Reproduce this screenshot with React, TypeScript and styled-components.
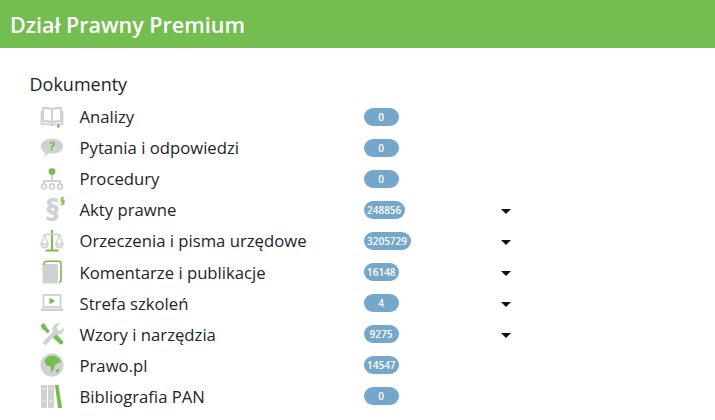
import React from "react";
import styled, { createGlobalStyle } from "styled-components";

const GREEN = "#74bd50";
const GREY = "#cfd2d3";

const BookIcon = () => (
  <svg viewBox="0 0 24 22" width="24" height="22">
    <path d="M12 3.500C9.500 1.800 6 1.500 3 2.100V15.500c3-.6 6.500-.3 9 1.400 2.500-1.700 6-2 9-1.400V2.100C18 1.500 14.500 1.800 12 3.500Z" fill="#fff" stroke={GREY} strokeWidth="2.200" />
    <path d="M12 3.500v13.400" stroke={GREY} strokeWidth="2" />
    <path d="M1.500 5v13.500c3.500-.6 7.500-.3 10.500.6 3-.9 7-1.200 10.500-.6V5" fill="none" stroke={GREY} strokeWidth="1.800" />
    <rect x="17" y="18.600" width="2.600" height="3" fill={GREEN} />
  </svg>
);

const QuestionIcon = () => (
  <svg viewBox="0 0 24 20" width="24" height="20">
    <path d="M12 .8c6.200 0 11.200 3.200 11.200 7.400s-5 7.400-11.200 7.400c-1 0-2-.1-3-.3L4.200 19l.9-4.500C2.500 13.100.8 10.800.8 8.200.8 4 5.800.8 12 .8Z" fill={GREY} />
    <path d="M9.300 5.800c.3-1.500 1.500-2.400 2.900-2.400 1.700 0 2.900 1 2.900 2.500 0 1.200-.7 1.800-1.500 2.300-.6.400-.9.700-.9 1.500h-1.900c0-1.300.5-2 1.300-2.600.6-.4 1-.7 1-1.200 0-.5-.4-.9-1-.9-.5 0-.9.300-1 1ZM10.800 10.500h1.900v1.900h-1.900Z" fill={GREEN} />
  </svg>
);

const TreeIcon = () => (
  <svg viewBox="0 0 24 22" width="24" height="22">
    <circle cx="12" cy="3.600" r="3.400" fill={GREEN} />
    <path d="M12 7v7M4 16v-3h16v3" fill="none" stroke={GREY} strokeWidth="1.800" />
    <circle cx="4" cy="18.400" r="2.400" fill="#fff" stroke={GREY} strokeWidth="1.800" />
    <circle cx="12" cy="18.400" r="2.400" fill="#fff" stroke={GREY} strokeWidth="1.800" />
    <circle cx="20" cy="18.400" r="2.400" fill="#fff" stroke={GREY} strokeWidth="1.800" />
  </svg>
);

const ScalesIcon = () => (
  <svg viewBox="0 0 24 22" width="24" height="22">
    <path d="M12 0v20" stroke={GREEN} strokeWidth="2" />
    <path d="M5.500 20.500h13" stroke={GREEN} strokeWidth="2" />
    <path d="M4 4.500h16" stroke={GREY} strokeWidth="1.800" />
    <path d="M4.500 4.500 1.200 14M4.500 4.500 8 14M19.500 4.500 16 14M19.500 4.500 22.800 14" fill="none" stroke={GREY} strokeWidth="1.300" />
    <path d="M1 14c.3 5 6.700 5 7.200 0ZM15.800 14c.4 5 6.800 5 7.200 0Z" fill="#e6e8e8" stroke={GREY} strokeWidth="1.400" />
  </svg>
);

const BinderIcon = () => (
  <svg viewBox="0 0 20 24" width="20" height="24">
    <rect x="0.500" y="4" width="15.500" height="19.500" rx="1.500" fill={GREY} />
    <path d="M1.200 5C1.800 2.500 3.500 1.200 5 1.200h11.500c1.500 0 2.500 1 2.500 2.500v16c0 1.500-.7 2.500-2 2.800" fill="none" stroke={GREEN} strokeWidth="1.600" />
  </svg>
);

const LaptopIcon = () => (
  <svg viewBox="0 0 24 18" width="24" height="18">
    <rect x="3.500" y="1" width="17" height="12" fill="#fff" stroke={GREY} strokeWidth="1.800" />
    <path d="M0.500 14.500h23l-1 2.500H1.500Z" fill={GREY} />
    <path d="M9.500 3.700v6.600l5.800-3.300Z" fill={GREEN} />
  </svg>
);

const ToolsIcon = () => (
  <svg viewBox="0 0 24 24" width="24" height="24">
    <path d="M2.500 20.500 13 9.500c-1-2.600-.3-5 1.400-6.600 1.800-1.600 4-2 5.800-1.300l-3.600 3.500.7 3 3 .8 3.400-3.400c.4 2.200-.3 4.400-2 5.800-1.700 1.400-3.800 1.800-5.700 1.100L5.500 23.500Z" fill={GREY} />
    <path d="M.8 3.500 3.200 1l3 2.800.3 1.800 3.500 3.400-2.400 2.400L4.200 8 2.500 7.400Z" fill={GREEN} />
    <path d="m13 15.500 3.200-3.200 7 7-.4 2.600-2.700.6Z" fill={GREEN} />
  </svg>
);

const GlobeIcon = () => (
  <svg viewBox="0 0 24 24" width="24" height="24">
    <circle cx="12" cy="12" r="11.500" fill={GREY} />
    <path d="M4.500 7.500C6 4.500 9 2.800 12 2.800c3.800 0 7.500 2 9 5.700.4 1.300-1.500.7-2.700 1.400-1 .7-2.300 1-3.200 2-.8 1-.3 2.400-1 3.500-.7 1.400-2 2.700-2.800 4-.7-1.700-.2-3.800-.7-5.400-.3-1.200-2.300-.6-3.500-1.300-1.500-.8-.8-2.200-2-3C5 8.200 4.200 8.300 4.500 7.500Z" fill={GREEN} />
    <path d="M16 17.500c1-.9 2.500-2 3.500-1.500-.3 1.500-1.500 3-3 3.800Z" fill={GREEN} />
  </svg>
);

const BooksIcon = () => (
  <svg viewBox="0 0 21 24" width="21" height="24">
    <rect x="0" y="1" width="6" height="23" fill={GREY} />
    <rect x="7" y="1" width="6" height="23" fill={GREY} />
    <path d="M1 5h4M1 17h4M8 5h4M8 17h4" stroke="#eceeee" strokeWidth="1" />
    <path d="M14 1h3.500L21 24h-4Z" fill={GREEN} />
  </svg>
);

const App: React.FC = () => {
  const items = [
    { label: "Analizy", count: "0", icon: <BookIcon /> },
    { label: "Pytania i odpowiedzi", count: "0", icon: <QuestionIcon /> },
    { label: "Procedury", count: "0", icon: <TreeIcon /> },
    {
      label: "Akty prawne",
      count: "248856",
      icon: (
        <ParagraphMark>
          §<ParagraphSup>§</ParagraphSup>
        </ParagraphMark>
      ),
      more: true,
    },
    { label: "Orzeczenia i pisma urzędowe", count: "3205729", icon: <ScalesIcon />, more: true },
    { label: "Komentarze i publikacje", count: "16148", icon: <BinderIcon />, more: true },
    { label: "Strefa szkoleń", count: "4", icon: <LaptopIcon />, more: true },
    { label: "Wzory i narzędzia", count: "9275", icon: <ToolsIcon />, more: true },
    { label: "Prawo.pl", count: "14547", icon: <GlobeIcon /> },
    { label: "Bibliografia PAN", count: "0", icon: <BooksIcon /> },
  ];

  return (
    <>
      <GlobalStyle />
      <Header>Dział Prawny Premium</Header>
      <Main>
        <SectionTitle>Dokumenty</SectionTitle>
        <List>
          {items.map((item) => (
            <Row key={item.label}>
              <IconCell>{item.icon}</IconCell>
              <Label>{item.label}</Label>
              <BadgeCell>
                <Badge>{item.count}</Badge>
              </BadgeCell>
              {item.more && <Caret />}
            </Row>
          ))}
        </List>
      </Main>
    </>
  );
};

export default App;

const GlobalStyle = createGlobalStyle`
  html, body {
    margin: 0;
    background: #ffffff;
    height: 420px;
    overflow: hidden;
    font-family: "Open Sans", sans-serif;
  }
`;

const Header = styled.header`
  height: 48px;
  background: ${GREEN};
  color: #ffffff;
  font-size: 21.5px;
  font-weight: 600;
  line-height: 50px;
  padding-left: 10px;
`;

const Main = styled.main`
  padding: 24px 0 0 29.5px;
`;

const SectionTitle = styled.h2`
  margin: 0;
  font-size: 18px;
  font-weight: 400;
  line-height: 24px;
  color: #212529;
`;

const List = styled.ul`
  list-style: none;
  margin: 5px 0 0;
  padding: 0;
`;

const Row = styled.li`
  display: flex;
  align-items: center;
  height: 31.1px;
`;

const IconCell = styled.span`
  display: flex;
  align-items: center;
  justify-content: center;
  width: 44px;
  box-sizing: border-box;
`;

const ParagraphMark = styled.span`
  position: relative;
  left: 1px;
  display: inline-block;
  font-size: 30px;
  font-weight: 800;
  line-height: 30px;
  height: 30px;
  color: ${GREY};
`;

const ParagraphSup = styled.span`
  position: absolute;
  top: 0;
  left: 100%;
  font-size: 10px;
  font-weight: 800;
  line-height: 12px;
  color: ${GREEN};
`;

const Label = styled.span`
  width: 284px;
  margin-left: 6px;
  font-size: 16.7px;
  color: #212529;
  white-space: nowrap;
`;

const BadgeCell = styled.span`
  width: 136px;
  display: flex;
`;

const Badge = styled.span`
  box-sizing: border-box;
  min-width: 35px;
  height: 18px;
  padding: 0 3.5px;
  border-radius: 9px;
  background: #74a7c9;
  color: #ffffff;
  font-size: 10px;
  font-weight: 600;
  line-height: 18px;
  text-align: center;
`;

const Caret = styled.span`
  width: 0;
  height: 0;
  margin-left: 1px;
  margin-top: 3px;
  border-left: 5px solid transparent;
  border-right: 5px solid transparent;
  border-top: 5px solid #111111;
`;
